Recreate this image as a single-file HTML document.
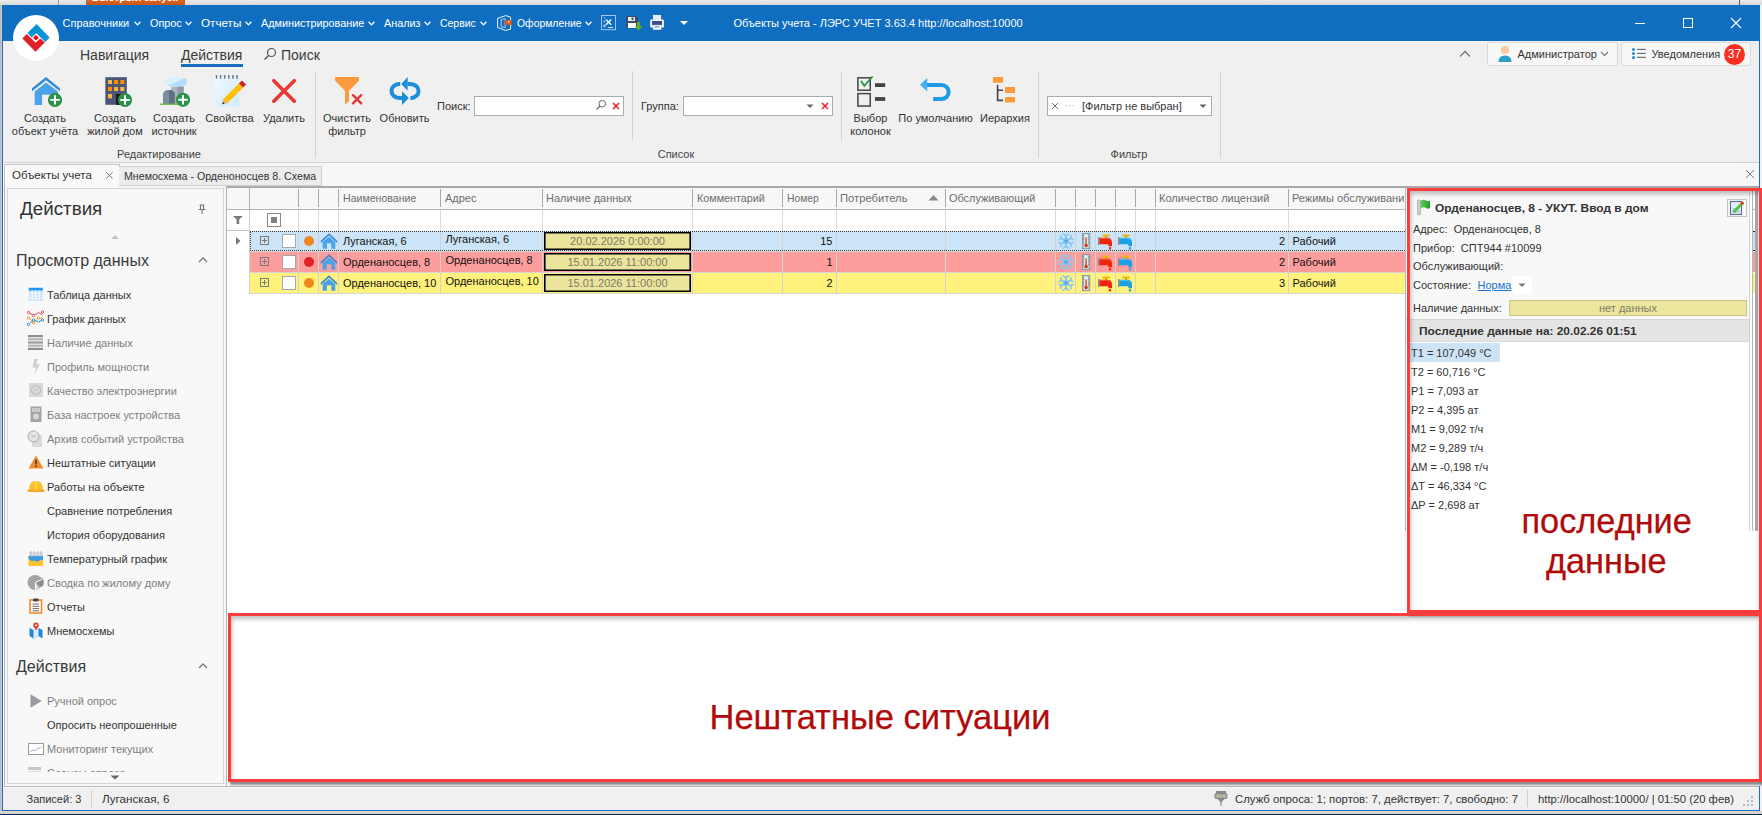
<!DOCTYPE html>
<html><head><meta charset="utf-8">
<style>
*{margin:0;padding:0;box-sizing:border-box}
html,body{width:1762px;height:815px;overflow:hidden}
body{position:relative;background:#f0f0f0;font-family:"Liberation Sans",sans-serif;font-size:11px;color:#333}
.a{position:absolute;white-space:nowrap}
.t{position:absolute;white-space:nowrap;line-height:14px;height:14px}
.w{color:#fff}
svg{position:absolute;overflow:visible}
.mi{position:absolute;top:16px;line-height:14px;color:#fff;font-size:11px;white-space:nowrap}
.chev{display:inline-block;width:4.6px;height:4.6px;border-right:1.3px solid #fff;border-bottom:1.3px solid #fff;transform:rotate(45deg);margin-left:5px;position:relative;top:-3px}
.lbl{position:absolute;text-align:center;line-height:13px;color:#333;white-space:nowrap}
.grp{position:absolute;top:147px;line-height:14px;color:#444;text-align:center}
.sep{position:absolute;width:1px;background:#d4d4d4}
.nav{position:absolute;left:47px;line-height:14px;color:#333}
.nav.g{color:#7f7f7f}
.hd{position:absolute;top:191px;line-height:14px;color:#6d6d6d}
.vl{position:absolute;width:1px;background:#d8d8d8}
.row{position:absolute;left:250px;width:1155px;height:21px}
.ct{position:absolute;line-height:14px;color:#111}
.pl{position:absolute;left:1413px;line-height:14px;color:#333}
.li{position:absolute;left:1411px;line-height:14px;color:#333}
</style></head><body>

<!-- top strip (desktop behind) -->
<div class="a" style="left:0;top:0;width:1762px;height:5px;background:linear-gradient(#ececec,#d6d6d6)"></div>
<div class="a" style="left:58px;top:0;width:1px;height:5px;background:#9a9a9a"></div>
<div class="a" style="left:86px;top:0;width:1px;height:5px;background:#7a7a7a"></div>
<div class="a" style="left:87px;top:0;width:98px;height:5px;background:linear-gradient(#e0641e,#c8561a);overflow:hidden"><div class="a" style="left:4.5px;top:-9.8px;font-size:11px;line-height:14px;color:#fff;font-weight:bold;transform-origin:0 0;transform:scaleX(0.95)">Быстрый запуск</div></div>
<div class="a" style="left:1739px;top:0;width:1px;height:5px;background:#555"></div>
<div class="a" style="left:0;top:5px;width:2px;height:810px;background:linear-gradient(90deg,#b4b4b4,#d0d0d0)"></div>

<!-- window frame -->
<div class="a" style="left:2px;top:5px;width:1758px;height:806px;border:1px solid #1a6fc0;background:#f0f0f0"></div>

<!-- title bar -->
<div class="a" style="left:2px;top:5px;width:1758px;height:36px;background:#0f6ebf"></div>


<!-- logo -->
<div class="a" style="left:13px;top:15px;width:46px;height:46px;border-radius:50%;background:#fff"></div>
<svg style="left:10px;top:10px" width="52" height="52" viewBox="0 0 52 52">
<polygon points="17.5,23 26.5,14 39.6,27.4 35.1,31.9 26.5,23.2 21.6,27.4" fill="#0894d6"/>
<polygon points="12.4,28.4 16.8,23.9 25.5,32.8 30.3,28.5 34.8,32.6 25.5,41.8" fill="#e21f26"/>
<polygon points="25.9,25 28.7,27.8 25.9,30.6 23.1,27.8" fill="#f00"/>
</svg>
<!-- menu -->
<div class="mi" style="left:62.5px;transform-origin:0 0;transform:scaleX(1.0)">Справочники</div><svg style="left:133.7px;top:20.5px" width="7" height="5" viewBox="0 0 7 5"><path d="M0.6 0.8 L3.5 3.9 L6.4 0.8" fill="none" stroke="#fff" stroke-width="1.3"/></svg>
<div class="mi" style="left:149.5px;transform-origin:0 0;transform:scaleX(0.985)">Опрос</div><svg style="left:184.8px;top:20.5px" width="7" height="5" viewBox="0 0 7 5"><path d="M0.6 0.8 L3.5 3.9 L6.4 0.8" fill="none" stroke="#fff" stroke-width="1.3"/></svg>
<div class="mi" style="left:200.5px;transform-origin:0 0;transform:scaleX(1.06)">Отчеты</div><svg style="left:245.1px;top:20.5px" width="7" height="5" viewBox="0 0 7 5"><path d="M0.6 0.8 L3.5 3.9 L6.4 0.8" fill="none" stroke="#fff" stroke-width="1.3"/></svg>
<div class="mi" style="left:260.5px;transform-origin:0 0;transform:scaleX(0.985)">Администрирование</div><svg style="left:368px;top:20.5px" width="7" height="5" viewBox="0 0 7 5"><path d="M0.6 0.8 L3.5 3.9 L6.4 0.8" fill="none" stroke="#fff" stroke-width="1.3"/></svg>
<div class="mi" style="left:383.5px;transform-origin:0 0;transform:scaleX(0.98)">Анализ</div><svg style="left:423.9px;top:20.5px" width="7" height="5" viewBox="0 0 7 5"><path d="M0.6 0.8 L3.5 3.9 L6.4 0.8" fill="none" stroke="#fff" stroke-width="1.3"/></svg>
<div class="mi" style="left:439.5px;transform-origin:0 0;transform:scaleX(0.95)">Сервис</div><svg style="left:479.5px;top:20.5px" width="7" height="5" viewBox="0 0 7 5"><path d="M0.6 0.8 L3.5 3.9 L6.4 0.8" fill="none" stroke="#fff" stroke-width="1.3"/></svg>
<svg style="left:494px;top:12px" width="26" height="22" viewBox="494 12 26 22">
<path d="M497.6 18.4 L505.6 15.6 L510.6 17.1 L510.6 29.1 L505.6 30.4 L497.6 27.6 Z" fill="none" stroke="#fff" stroke-width="0.9"/>
<path d="M501.2 19.6 L505.2 18.7 L505.2 27.4 L501.2 27 Z" fill="none" stroke="#dbeaf7" stroke-width="0.8"/>
<rect x="504.9" y="20.1" width="6.9" height="4.7" fill="#e8501a"/>
<path d="M507.5 21.3 H510 M508.7 21.3 V23.5" stroke="#f6d0c0" stroke-width="0.9"/>
</svg>
<div class="mi" style="left:516.5px;transform-origin:0 0;transform:scaleX(0.945)">Оформление</div><svg style="left:585px;top:20.5px" width="7" height="5" viewBox="0 0 7 5"><path d="M0.6 0.8 L3.5 3.9 L6.4 0.8" fill="none" stroke="#fff" stroke-width="1.3"/></svg>
<svg style="left:600px;top:14px" width="18" height="18" viewBox="0 0 18 18">
<rect x="1.5" y="1.5" width="14" height="14.2" fill="none" stroke="#9fc6ea" stroke-width="1"/>
<path d="M6 5.5 L11.2 10.7 M11.2 5.5 L6 10.7" stroke="#f2f7fc" stroke-width="1.5"/>
<circle cx="4.5" cy="3.8" r="0.8" fill="#9cc4e8"/><circle cx="4.3" cy="7.5" r="1" fill="#9cc4e8"/><circle cx="4.5" cy="11.8" r="1.5" fill="#9cc4e8"/><path d="M8 13.5 L13 13.5" stroke="#c9dff2" stroke-width="1"/>
</svg>
<svg style="left:625px;top:14px" width="18" height="18" viewBox="0 0 18 18">
<path d="M1 2 L11 2 L13 4 L13 14 L1 14 Z" fill="#3b4b6b"/>
<rect x="3" y="3" width="7" height="4" fill="#e8eef5"/><rect x="6.5" y="3.5" width="2" height="2.5" fill="#3b4b6b"/>
<rect x="3" y="9" width="8" height="5" fill="#fff"/>
<path d="M12 8 L12 12 L9.5 12 L13.5 16.5 L17.5 12 L15 12 L15 8 Z" fill="#5cb030"/>
</svg>
<svg style="left:648px;top:12px" width="18" height="20" viewBox="648 12 18 20">
<rect x="653.4" y="15.3" width="7.3" height="6.9" fill="#e4e8f2" stroke="#fff" stroke-width="0.7"/>
<rect x="650.2" y="19.5" width="13.7" height="8.1" rx="1.2" fill="#f4f6fb"/>
<rect x="652" y="21" width="10" height="4.2" fill="#3d4a7a"/>
<rect x="653.1" y="25.1" width="7.9" height="4.6" fill="#fff" stroke="#c9d3e6" stroke-width="0.6"/>
<rect x="654.5" y="26.3" width="5" height="1.1" fill="#4a90d9"/>
</svg>
<svg style="left:679px;top:20px" width="10" height="6" viewBox="0 0 10 6"><path d="M1 1 L9 1 L5 5 Z" fill="#fff"/></svg>
<div class="mi" style="left:733.5px">Объекты учета - ЛЭРС УЧЕТ 3.63.4 http://localhost:10000</div>
<!-- window buttons -->
<div class="a" style="left:1635px;top:23px;width:10px;height:1px;background:#fff"></div>
<div class="a" style="left:1683px;top:18px;width:10px;height:10px;border:1px solid #fff"></div>
<svg style="left:1730px;top:17px" width="12" height="12" viewBox="0 0 12 12"><path d="M1 1 L11 11 M11 1 L1 11" stroke="#fff" stroke-width="1.1"/></svg>


<!-- ribbon tabs -->
<div class="a" style="left:80px;top:45.5px;font-size:14px;line-height:18px;color:#3a3a3a">Навигация</div>
<div class="a" style="left:181px;top:45.5px;font-size:14px;line-height:18px;color:#3a3a3a">Действия</div>
<div class="a" style="left:181px;top:64px;width:62px;height:3px;background:#1b6ec2"></div>
<svg style="left:263px;top:47px" width="14" height="14" viewBox="0 0 14 14"><circle cx="8.5" cy="5.5" r="4" fill="none" stroke="#555" stroke-width="1.2"/><path d="M5.6 8.4 L1.5 12.5" stroke="#555" stroke-width="1.4"/></svg>
<div class="a" style="left:281px;top:45.5px;font-size:14px;line-height:18px;color:#3a3a3a">Поиск</div>

<!-- ribbon icons -->
<svg style="left:28px;top:72px" width="36" height="38" viewBox="28 72 36 38">
<path d="M32 88.2 L46 77 L59.9 88.2 L59.9 91.2 L46 80.2 L32 91.2 Z" fill="#2f8ad8"/>
<path d="M34.7 91.6 L46 82.6 L58 91.6 L58 105 L34.7 105 Z" fill="#4aa3ea"/>
<rect x="42.1" y="94.7" width="10" height="10.4" fill="#f0f0f0"/>
<circle cx="55" cy="99.9" r="7.1" fill="#2e9148"/>
<path d="M50.3 99.9 H59.7 M55 95.2 V104.6" stroke="#fff" stroke-width="1.9"/>
</svg>
<svg style="left:100px;top:72px" width="36" height="38" viewBox="100 72 36 38">
<rect x="105.3" y="77.2" width="21.5" height="27.6" fill="#4a5677"/>
<rect x="108" y="80" width="4" height="4" fill="#ffb347"/><rect x="114.1" y="80" width="4" height="4" fill="#ff8f00"/><rect x="120.3" y="80" width="4" height="4" fill="#ff8f00"/>
<rect x="108" y="87" width="4" height="4" fill="#ff8f00"/><rect x="114.1" y="87" width="4" height="4" fill="#ffb347"/><rect x="120.3" y="87" width="4" height="4" fill="#ffb347"/>
<rect x="108" y="94" width="4" height="4.4" fill="#ffb347"/>
<rect x="116" y="94" width="6" height="10.8" fill="#1a1a1a"/>
<circle cx="125" cy="100" r="7.1" fill="#2e9148"/>
<path d="M120.3 100 H129.7 M125 95.3 V104.7" stroke="#fff" stroke-width="1.9"/>
</svg>
<svg style="left:156px;top:72px" width="36" height="38" viewBox="156 72 36 38">
<ellipse cx="175.5" cy="81.8" rx="11.4" ry="4.9" fill="#dcf0fc"/>
<path d="M167 86 L185 77.8 Q187.5 79.5 186.8 82.5 Q186 86.5 181 86.7 Z" fill="#b3defa"/>
<path d="M171.1 86.7 H183.8 L183 103.9 H172 Z" fill="#a9b5be"/>
<path d="M177.5 86.7 H183.8 L183 103.9 H177.5 Z" fill="#8d9ba6"/>
<path d="M163 103.9 V95 Q163 90 169 90 Q174.8 90 174.8 95 V103.9 Z" fill="#7b8d9e"/>
<path d="M169 90 Q174.8 90 174.8 95 V103.9 H169 Z" fill="#5c7080"/>
<rect x="160" y="103.5" width="18" height="1.4" fill="#6fb43f"/>
<circle cx="183" cy="99.8" r="7.1" fill="#2e9148"/>
<path d="M178.3 99.8 H187.7 M183 95.1 V104.5" stroke="#fff" stroke-width="1.9"/>
</svg>
<svg style="left:210px;top:72px" width="40" height="38" viewBox="210 72 40 38">
<defs><linearGradient id="np" x1="0" y1="0" x2="1" y2="1"><stop offset="0" stop-color="#eff8fe"/><stop offset="1" stop-color="#d3eaf9"/></linearGradient></defs>
<rect x="214" y="76.5" width="25.7" height="30.2" fill="url(#np)"/>
<path d="M216.5 75 V78.7 M220.6 75 V78.7 M224.7 75 V78.7 M228.8 75 V78.7 M232.9 75 V78.7 M237 75 V78.7" stroke="#6c7a8c" stroke-width="1.5"/>
<path d="M225 101.5 L241 85.5" stroke="#ffc107" stroke-width="6"/>
<path d="M241 85.5 L244 82.5" stroke="#c62828" stroke-width="6"/>
<path d="M222.2 104.3 L223.5 98.8 L227.7 103 Z" fill="#e8b27a"/>
<path d="M222.2 104.3 L222.8 101.8 L224.7 103.7 Z" fill="#333"/>
</svg>
<svg style="left:268px;top:72px" width="32" height="36" viewBox="268 72 32 36">
<path d="M273.8 80.7 L294.3 101.2 M294.3 80.7 L273.8 101.2" stroke="#e53935" stroke-width="3.6" stroke-linecap="round"/>
</svg>
<svg style="left:330px;top:72px" width="36" height="38" viewBox="330 72 36 38">
<path d="M335.1 77 H359 V80.8 L349 90.7 V101 L345 104.6 V90.7 L335.1 80.8 Z" fill="#fd9a3c"/>
<path d="M353 95.2 L361.2 103.4 M361.2 95.2 L353 103.4" stroke="#e53935" stroke-width="2.4" stroke-linecap="round"/>
</svg>
<svg style="left:389px;top:74px" width="38" height="34" viewBox="0 -3 38 34">
<path d="M11.2 6.9 A8.2 7.1 0 0 0 10.2 21.1 L14 21.1" fill="none" stroke="#1a8ed8" stroke-width="4"/>
<path d="M13 14.3 L19.9 21.1 L13 27.9 Z" fill="#1a8ed8"/>
<path d="M21.4 21.1 A8.2 7.1 0 0 0 21.4 6.9 L18.5 6.9" fill="none" stroke="#1a8ed8" stroke-width="4"/>
<path d="M18.7 0.1 L12.2 6.9 L18.7 13.7 Z" fill="#1a8ed8"/>
</svg>
<svg style="left:850px;top:72px" width="40" height="38" viewBox="850 72 40 38">
<rect x="857.9" y="77.8" width="12.3" height="12.4" fill="none" stroke="#444" stroke-width="1.5"/>
<rect x="857.9" y="93.6" width="12.3" height="12.4" fill="none" stroke="#444" stroke-width="1.5"/>
<path d="M861 81 L864.3 85.8 L872.6 76.5" fill="none" stroke="#22973c" stroke-width="1.8"/>
<rect x="875" y="83.2" width="10.2" height="3.8" fill="#444"/>
<rect x="875" y="97.1" width="10.2" height="3.8" fill="#444"/>
</svg>
<svg style="left:915px;top:72px" width="42" height="36" viewBox="915 72 42 36">
<path d="M926 85 H941.5 A7.2 7 0 0 1 941.5 99 H933.2" fill="none" stroke="#1e9be8" stroke-width="4"/>
<path d="M920 84.8 L927.2 78.1 V91.4 Z" fill="#47aef0"/>
</svg>
<svg style="left:990px;top:72px" width="30" height="36" viewBox="990 72 30 36">
<rect x="993" y="77.1" width="10" height="5.6" rx="0.5" fill="#fd9a3c"/>
<path d="M997.6 84.8 V100.4 H1003 M997.6 90.2 H1003" fill="none" stroke="#444" stroke-width="1.6"/>
<rect x="1005" y="87.1" width="10" height="5.9" rx="0.5" fill="#fd9a3c"/>
<rect x="1005" y="97" width="10" height="5.6" rx="0.5" fill="#fd9a3c"/>
</svg>

<!-- ribbon labels -->
<div class="lbl" style="left:5px;top:112px;width:80px">Создать<br>объект учёта</div>
<div class="lbl" style="left:75px;top:112px;width:80px">Создать<br>жилой дом</div>
<div class="lbl" style="left:134px;top:112px;width:80px">Создать<br>источник</div>
<div class="lbl" style="left:189.5px;top:112px;width:80px">Свойства</div>
<div class="lbl" style="left:244px;top:112px;width:80px">Удалить</div>
<div class="lbl" style="left:307px;top:112px;width:80px">Очистить<br>фильтр</div>
<div class="lbl" style="left:364.5px;top:112px;width:80px">Обновить</div>
<div class="lbl" style="left:830.5px;top:112px;width:80px">Выбор<br>колонок</div>
<div class="lbl" style="left:885.5px;top:112px;width:100px">По умолчанию</div>
<div class="lbl" style="left:965px;top:112px;width:80px">Иерархия</div>

<div class="grp" style="left:59px;width:200px">Редактирование</div>
<div class="grp" style="left:576px;width:200px">Список</div>
<div class="grp" style="left:1029px;width:200px">Фильтр</div>
<div class="sep" style="left:315px;top:71px;height:87px"></div>
<div class="sep" style="left:632px;top:71px;height:70px"></div>
<div class="sep" style="left:841px;top:71px;height:70px"></div>
<div class="sep" style="left:1038px;top:71px;height:87px"></div>
<div class="sep" style="left:1220px;top:71px;height:87px"></div>

<!-- search boxes -->
<div class="t" style="left:437px;top:99px;color:#333">Поиск:</div>
<div class="a" style="left:474px;top:96px;width:150px;height:20px;background:#fff;border:1px solid #acacac"></div>
<svg style="left:595px;top:99px" width="12" height="12" viewBox="0 0 12 12"><circle cx="7.3" cy="4.7" r="3.3" fill="none" stroke="#666" stroke-width="1"/><path d="M5 7 L1.5 10.5" stroke="#666" stroke-width="1.3"/></svg>
<svg style="left:612px;top:102px" width="8" height="8" viewBox="0 0 8 8"><path d="M1 1 L7 7 M7 1 L1 7" stroke="#e8222a" stroke-width="1.6"/></svg>
<div class="t" style="left:641px;top:99px;color:#333">Группа:</div>
<div class="a" style="left:683px;top:96px;width:150px;height:20px;background:#fff;border:1px solid #acacac"></div>
<svg style="left:806px;top:104px" width="8" height="5" viewBox="0 0 8 5"><path d="M0.5 0.5 H7.5 L4 4 Z" fill="#666"/></svg>
<svg style="left:821px;top:102px" width="8" height="8" viewBox="0 0 8 8"><path d="M1 1 L7 7 M7 1 L1 7" stroke="#e8222a" stroke-width="1.6"/></svg>

<div class="a" style="left:1047px;top:96px;width:165px;height:20px;background:#fff;border:1px solid #acacac"></div>
<svg style="left:1050.5px;top:102px" width="8" height="8" viewBox="0 0 8 8"><path d="M1 1 L7 7 M7 1 L1 7" stroke="#777" stroke-width="1"/></svg>
<div class="t" style="left:1065px;top:98px;color:#bbb;letter-spacing:-0.5px">···</div>
<div class="t" style="left:1082px;top:99px;color:#333">[Фильтр не выбран]</div>
<svg style="left:1199px;top:104px" width="8" height="5" viewBox="0 0 8 5"><path d="M0.5 0.5 H7.5 L4 4 Z" fill="#666"/></svg>

<!-- ribbon bottom -->
<div class="a" style="left:3px;top:162px;width:1756px;height:1px;background:#d2d2d2"></div>

<!-- right of ribbon -->
<svg style="left:1459px;top:50px" width="12" height="8" viewBox="0 0 12 8"><path d="M1 6.5 L6 1.5 L11 6.5" fill="none" stroke="#777" stroke-width="1.3"/></svg>
<div class="a" style="left:1487px;top:42px;width:131px;height:24px;background:#f7f7f7;border:1px solid #d9d9d9;border-radius:2px"></div>
<svg style="left:1497px;top:45px" width="16" height="18" viewBox="0 0 16 18"><circle cx="8" cy="5" r="4" fill="#f9c89b"/><path d="M1.5 17 Q1.5 10.5 8 10.5 Q14.5 10.5 14.5 17 Z" fill="#2aa0c4"/></svg>
<div class="t" style="left:1517.5px;top:47px;color:#333">Администратор</div>
<svg style="left:1600px;top:51px" width="9" height="6" viewBox="0 0 9 6"><path d="M1 1 L4.5 4.5 L8 1" fill="none" stroke="#777" stroke-width="1.1"/></svg>
<div class="a" style="left:1621px;top:42px;width:130px;height:24px;background:#f7f7f7;border:1px solid #d9d9d9;border-radius:2px"></div>
<svg style="left:1631px;top:47px" width="16" height="14" viewBox="0 0 16 14"><circle cx="2.5" cy="2.5" r="1.5" fill="#1b8ad6"/><circle cx="2.5" cy="6.5" r="1.5" fill="#1b8ad6"/><circle cx="2.5" cy="10.4" r="1.5" fill="#1b8ad6"/><path d="M6 2.4 H14.8 M6 6.4 H14.8 M6 10.3 H14.8" stroke="#444" stroke-width="0.9"/></svg>
<div class="t" style="left:1651.5px;top:47px;color:#333">Уведомления</div>
<div class="a" style="left:1724px;top:43.5px;width:21px;height:21px;border-radius:50%;background:#fb2f1f;color:#fff;font-size:12px;line-height:20px;text-align:center">37</div>


<!-- tab strip -->
<div class="a" style="left:3px;top:163px;width:1756px;height:24px;background:#f7f7f7"></div>
<div class="a" style="left:4px;top:164px;width:116px;height:23px;background:#f9f9f9;border:1px solid #c6c6c6;border-bottom:none"></div>
<div class="t" style="left:11.5px;top:168px;color:#333;transform-origin:0 0;transform:scaleX(1.045)">Объекты учета</div>
<svg style="left:105px;top:171px" width="9" height="9" viewBox="0 0 9 9"><path d="M1.3 1.3 L7.5 7.5 M7.5 1.3 L1.3 7.5" stroke="#777" stroke-width="1"/></svg>
<div class="a" style="left:119px;top:166px;width:203px;height:20px;background:#ececec;border:1px solid #d0d0d0;border-left:none"></div>
<div class="t" style="left:123.5px;top:169px;color:#333;transform-origin:0 0;transform:scaleX(0.966)">Мнемосхема - Орденоносцев 8. Схема</div>
<svg style="left:1744.5px;top:169px" width="10" height="10" viewBox="0 0 10 10"><path d="M1 1 L9 9 M9 1 L1 9" stroke="#6e6e6e" stroke-width="0.9"/></svg>

<!-- page background -->
<div class="a" style="left:3px;top:186px;width:1756px;height:601px;background:#f7f7f7"></div>
<div class="a" style="left:4px;top:786px;width:1755px;height:1px;background:#b8b8b8"></div><div class="a" style="left:4px;top:186px;width:1px;height:600px;background:#b8b8b8"></div><div class="a" style="left:3px;top:787px;width:1756px;height:1px;background:#fafafa"></div>

<!-- left panel -->
<div class="a" style="left:7px;top:188px;width:217px;height:596px;border:1px solid #d5d5d5;background:#f8f8f8"></div>
<div class="a" style="left:20px;top:198px;font-size:18.8px;line-height:22px;color:#333">Действия</div>
<svg style="left:197px;top:204px" width="10" height="11" viewBox="0 0 10 11"><path d="M2.5 1 H7.5 M3.5 1 V5 M6.5 1 V5 M1.5 5.5 H8.5 M5 5.5 V10" stroke="#777" stroke-width="1.1" fill="none"/></svg>
<svg style="left:111px;top:235px" width="8" height="4" viewBox="0 0 8 4"><path d="M0 4 L4 0 L8 4 Z" fill="#c4c4c4"/></svg>
<div class="a" style="left:16px;top:251.5px;font-size:16px;line-height:18px;color:#3a3a3a">Просмотр данных</div>
<svg style="left:197px;top:255px" width="12" height="9" viewBox="0 0 12 9"><path d="M2 7 L6 3 L10 7" fill="none" stroke="#777" stroke-width="1.3"/></svg>

<svg style="left:28px;top:287px" width="16" height="16" viewBox="0 0 16 16">
<rect x="0.7" y="0.8" width="14.1" height="13" fill="#bfe0fb"/>
<rect x="0.7" y="0.8" width="14.1" height="2.6" fill="#2196f3"/>
<path d="M0.7 6.2 H14.8 M0.7 9 H14.8 M0.7 11.6 H14.8 M4.2 3.4 V13.8 M7.7 3.4 V13.8 M11.2 3.4 V13.8" stroke="#fff" stroke-width="0.9"/>
</svg>
<div class="nav" style="top:288px">Таблица данных</div>
<svg style="left:27px;top:310px" width="18" height="17" viewBox="0 0 18 17">
<path d="M1.5 2.5 L6.5 5.5 L11.5 2.5 L15.5 5" fill="none" stroke="#e84a4a" stroke-width="1"/>
<path d="M1.5 7 L6.5 12.5 L11.5 8 L15.5 8" fill="none" stroke="#f59a36" stroke-width="1"/>
<path d="M1.5 14.5 L6.5 10 L11.5 12 L15.5 10" fill="none" stroke="#2b8fd9" stroke-width="1"/>
<g fill="#fff" stroke-width="1"><circle cx="1.5" cy="2.5" r="1.2" stroke="#e84a4a"/><circle cx="6.5" cy="5.5" r="1.2" stroke="#e84a4a"/><circle cx="15.5" cy="2" r="1.2" stroke="#e84a4a"/>
<circle cx="1.5" cy="8" r="1.2" stroke="#f59a36"/><circle cx="11.5" cy="8" r="1.2" stroke="#f59a36"/><circle cx="6.5" cy="13" r="1.2" stroke="#f59a36"/>
<circle cx="1.5" cy="14.5" r="1.2" stroke="#2b8fd9"/><circle cx="6.5" cy="10" r="1.2" stroke="#2b8fd9"/><circle cx="15.5" cy="10" r="1.2" stroke="#2b8fd9"/></g>
</svg>
<div class="nav" style="top:312px">График данных</div>
<svg style="left:28px;top:335px" width="16" height="16" viewBox="0 0 16 16">
<rect x="0" y="0" width="15" height="2.2" fill="#8f8f8f"/><rect x="0" y="3.2" width="15" height="2.2" fill="#b5b5b5"/><rect x="0" y="6.4" width="15" height="2.2" fill="#9a9a9a"/><rect x="0" y="9.6" width="15" height="2.2" fill="#b5b5b5"/><rect x="0" y="12.8" width="15" height="2.2" fill="#8f8f8f"/>
</svg>
<div class="nav g" style="top:336px">Наличие данных</div>
<svg style="left:31px;top:359px" width="10" height="16" viewBox="0 0 10 16"><path d="M3 0 L7 0 L5 5 L8.5 5 L4 15.5 L5 8.5 L1.5 8.5 Z" fill="#cfcfcf"/></svg>
<div class="nav g" style="top:360px">Профиль мощности</div>
<svg style="left:29px;top:383px" width="15" height="15" viewBox="0 0 15 15"><rect x="0" y="0" width="14" height="14" fill="#d9d9d9"/><circle cx="7" cy="7" r="4.5" fill="none" stroke="#b8b8b8" stroke-width="1"/><path d="M3 10 L11 4" stroke="#bbb" stroke-width="0.8"/></svg>
<div class="nav g" style="top:384px">Качество электроэнергии</div>
<svg style="left:30px;top:406px" width="12" height="17" viewBox="0 0 12 17"><rect x="0.5" y="0.5" width="11" height="15.5" fill="#a5a5a5"/><rect x="2" y="2" width="8" height="4" fill="#cacaca"/><circle cx="6" cy="10.5" r="3" fill="#d6d6d6"/></svg>
<div class="nav g" style="top:408px">База настроек устройства</div>
<svg style="left:27px;top:430px" width="18" height="18" viewBox="0 0 18 18"><rect x="5" y="5" width="10" height="12" fill="#dadada"/><circle cx="6.5" cy="6.5" r="5.5" fill="#e4e4e4" stroke="#a8a8a8" stroke-width="1"/><path d="M4.5 5 L6.5 7 L8.5 5" fill="none" stroke="#999" stroke-width="0.8"/></svg>
<div class="nav g" style="top:432px">Архив событий устройства</div>
<svg style="left:28px;top:455px" width="16" height="14" viewBox="0 0 16 14"><path d="M8 0.5 L15.5 13.5 H0.5 Z" fill="#f58a2a"/><rect x="7.2" y="4.5" width="1.7" height="5" fill="#444"/><rect x="7.2" y="10.5" width="1.7" height="1.6" fill="#444"/></svg>
<div class="nav" style="top:456px">Нештатные ситуации</div>
<svg style="left:27px;top:480px" width="18" height="13" viewBox="0 0 18 13"><path d="M2 10 Q2 1 9 1 Q16 1 16 10 Z" fill="#fbc02d"/><rect x="0.5" y="9.5" width="17" height="2.5" rx="1" fill="#f9a825"/><rect x="8" y="1" width="2" height="8.5" fill="#f9d64a"/></svg>
<div class="nav" style="top:480px">Работы на объекте</div>
<div class="nav" style="top:504px">Сравнение потребления</div>
<div class="nav" style="top:528px">История оборудования</div>
<svg style="left:28px;top:551px" width="16" height="16" viewBox="0 0 16 16"><rect x="0.5" y="5" width="14.5" height="10" fill="#fcc12e"/><path d="M0.5 5 H15 V9 Q12 8 10 11 Q7 9 4 10 Q2 9 0.5 8 Z" fill="#3a9be0"/><path d="M3 0 V6 M6.5 0 V6 M10 0 V6 M13 0 V6 M1 2 H15 M1 4.2 H15" stroke="#aab4c0" stroke-width="0.8"/></svg>
<div class="nav" style="top:552px">Температурный график</div>
<svg style="left:27px;top:574px" width="17" height="17" viewBox="0 0 17 17"><circle cx="8" cy="8.5" r="7.5" fill="#a4a4a4"/><path d="M8.5 8.5 L15 3.5 A7.5 7.5 0 0 1 15 13 Z" fill="#8d8d8d"/><path d="M8.5 8.5 L13 15 A7.5 7.5 0 0 1 8.5 16 Z" fill="#d9d9d9"/><path d="M8.5 8.5 L15.5 5 M8.5 8.5 V16" stroke="#fff" stroke-width="1"/></svg>
<div class="nav g" style="top:576px">Сводка по жилому дому</div>
<svg style="left:29px;top:598px" width="14" height="16" viewBox="0 0 14 16"><rect x="1" y="2" width="11.5" height="13" fill="#fff" stroke="#f58a2a" stroke-width="1.6"/><rect x="4" y="0.5" width="5.5" height="3" rx="1" fill="#444"/><path d="M3.5 6 H10 M3.5 8.3 H10 M3.5 10.6 H10 M3.5 12.8 H10" stroke="#555" stroke-width="0.9"/></svg>
<div class="nav" style="top:600px">Отчеты</div>
<svg style="left:29px;top:622px" width="14" height="17" viewBox="0 0 14 17"><path d="M0.5 6 L4.5 8 L9.5 6 L13.5 8 L13.5 16.5 L9.5 14 L4.5 16.5 L0.5 14 Z" fill="#1e88d6"/><path d="M4.5 8 L9.5 6 L9.5 14 L4.5 16.5 Z" fill="#fff" opacity="0.85"/><circle cx="7" cy="3.3" r="2.7" fill="#e53935"/><path d="M5 4.5 L7 8.5 L9 4.5 Z" fill="#e53935"/><circle cx="7" cy="3.3" r="1" fill="#fff"/></svg>
<div class="nav" style="top:624px">Мнемосхемы</div>

<div class="a" style="left:16px;top:657.5px;font-size:16px;line-height:18px;color:#3a3a3a">Действия</div>
<svg style="left:197px;top:661px" width="12" height="9" viewBox="0 0 12 9"><path d="M2 7 L6 3 L10 7" fill="none" stroke="#777" stroke-width="1.3"/></svg>
<svg style="left:30px;top:694px" width="12" height="14" viewBox="0 0 12 14"><path d="M0.5 0.3 L11.8 7 L0.5 13.7 Z" fill="#9b9b9b"/></svg>
<div class="nav g" style="top:694px">Ручной опрос</div>
<div class="nav" style="top:718px">Опросить неопрошенные</div>
<svg style="left:28px;top:743px" width="16" height="12" viewBox="0 0 16 12"><rect x="0.5" y="0.5" width="15" height="11" fill="#fff" stroke="#9a9a9a"/><path d="M2 9 L5 7 L7 8 L10 5 L12 5.5 L14 3.5" fill="none" stroke="#aaa" stroke-width="0.9"/></svg>
<div class="nav g" style="top:742px">Мониторинг текущих</div>
<div class="a" style="left:8px;top:764px;width:215px;height:8px;overflow:hidden">
<svg style="left:20px;top:3px" width="14" height="10" viewBox="0 0 14 10"><rect x="0" y="0" width="13" height="3" fill="#c8c8c8"/><rect x="0" y="4" width="13" height="6" fill="#dcdcdc"/></svg>
<div class="nav g" style="left:39px;top:2px">Сеансы опроса</div>
</div>
<div class="a" style="left:8px;top:772px;width:215px;height:11px;background:#f8f8f8"></div>
<svg style="left:110px;top:775px" width="10" height="5" viewBox="0 0 10 5"><path d="M0.5 0.5 H9.5 L5 4.5 Z" fill="#666"/></svg>

<!-- status bar -->
<div class="t" style="left:26.5px;top:792px;color:#333">Записей: 3</div>
<div class="a" style="left:91px;top:790px;width:1px;height:17px;background:#d0d0d0"></div>
<div class="t" style="left:101.5px;top:792px;color:#333;transform-origin:0 0;transform:scaleX(1.06)">Луганская, 6</div>
<svg style="left:1214px;top:790px" width="14" height="17" viewBox="0 0 14 17"><rect x="2" y="1" width="10" height="2" fill="#888"/><rect x="1" y="3.5" width="12" height="5" rx="1" fill="#a8a8a8" stroke="#777" stroke-width="0.8"/><path d="M3 8.5 L11 8.5 L7 12.5 Z" fill="#888"/><path d="M7 12 V16" stroke="#777" stroke-width="1"/><circle cx="4" cy="6" r="0.8" fill="#f5d36a"/><circle cx="7" cy="6" r="0.8" fill="#f5d36a"/><circle cx="10" cy="6" r="0.8" fill="#f5d36a"/></svg>
<div class="t" style="left:1234.5px;top:792px;color:#333;transform-origin:0 0;transform:scaleX(1.033)">Служб опроса: 1; портов: 7, действует: 7, свободно: 7</div>
<div class="a" style="left:1527px;top:790px;width:1px;height:17px;background:#d0d0d0"></div>
<div class="t" style="left:1537.5px;top:792px;color:#333;transform-origin:0 0;transform:scaleX(1.027)">http://localhost:10000/ | 01:50 (20 фев)</div>
<svg style="left:1743px;top:795px" width="12" height="12" viewBox="0 0 12 12"><g fill="#bbb"><rect x="8" y="1" width="2" height="2"/><rect x="4" y="5" width="2" height="2"/><rect x="8" y="5" width="2" height="2"/><rect x="0" y="9" width="2" height="2"/><rect x="4" y="9" width="2" height="2"/><rect x="8" y="9" width="2" height="2"/></g></svg>
<div class="a" style="left:0;top:811px;width:1762px;height:3px;background:#d8d4d0"></div>
<div class="a" style="left:0;top:814px;width:1762px;height:1px;background:#0c2340"></div>

<!-- grid -->
<div class="a" style="left:226px;top:186px;width:1180px;height:600px;background:#fff"></div>
<div class="a" style="left:226px;top:186px;width:1180px;height:2px;background:#a9a9a9"></div>
<div class="a" style="left:226px;top:186px;width:1px;height:600px;background:#b5b5b5"></div>
<div class="a" style="left:227px;top:188px;width:1178px;height:21px;background:#f7f7f7"></div>
<div class="a" style="left:227px;top:209px;width:1178px;height:1px;background:#b4b4b4"></div>
<div class="a" style="left:227px;top:230px;width:22px;height:1px;background:#c4c4c4"></div>
<div class="a" style="left:249px;top:188px;width:1px;height:22px;background:#b4b4b4"></div>
<div class="a" style="left:298px;top:189px;width:1px;height:18px;background:#a8a8a8"></div>
<div class="a" style="left:318px;top:189px;width:1px;height:18px;background:#a8a8a8"></div>
<div class="a" style="left:338px;top:189px;width:1px;height:18px;background:#a8a8a8"></div>
<div class="a" style="left:440px;top:189px;width:1px;height:18px;background:#a8a8a8"></div>
<div class="a" style="left:542px;top:189px;width:1px;height:18px;background:#a8a8a8"></div>
<div class="a" style="left:692px;top:189px;width:1px;height:18px;background:#a8a8a8"></div>
<div class="a" style="left:782px;top:189px;width:1px;height:18px;background:#a8a8a8"></div>
<div class="a" style="left:836px;top:189px;width:1px;height:18px;background:#a8a8a8"></div>
<div class="a" style="left:945px;top:189px;width:1px;height:18px;background:#a8a8a8"></div>
<div class="a" style="left:1055px;top:189px;width:1px;height:18px;background:#a8a8a8"></div>
<div class="a" style="left:1075px;top:189px;width:1px;height:18px;background:#a8a8a8"></div>
<div class="a" style="left:1095px;top:189px;width:1px;height:18px;background:#a8a8a8"></div>
<div class="a" style="left:1115px;top:189px;width:1px;height:18px;background:#a8a8a8"></div>
<div class="a" style="left:1135px;top:189px;width:1px;height:18px;background:#a8a8a8"></div>
<div class="a" style="left:1155px;top:189px;width:1px;height:18px;background:#a8a8a8"></div>
<div class="a" style="left:1288px;top:189px;width:1px;height:18px;background:#a8a8a8"></div>
<div class="a" style="left:249px;top:210px;width:1px;height:84px;background:#cfcfcf"></div>
<div class="a" style="left:298px;top:210px;width:1px;height:21px;background:#dadada"></div>
<div class="a" style="left:318px;top:210px;width:1px;height:21px;background:#dadada"></div>
<div class="a" style="left:338px;top:210px;width:1px;height:21px;background:#dadada"></div>
<div class="a" style="left:440px;top:210px;width:1px;height:21px;background:#dadada"></div>
<div class="a" style="left:542px;top:210px;width:1px;height:21px;background:#dadada"></div>
<div class="a" style="left:692px;top:210px;width:1px;height:21px;background:#dadada"></div>
<div class="a" style="left:782px;top:210px;width:1px;height:21px;background:#dadada"></div>
<div class="a" style="left:836px;top:210px;width:1px;height:21px;background:#dadada"></div>
<div class="a" style="left:945px;top:210px;width:1px;height:21px;background:#dadada"></div>
<div class="a" style="left:1055px;top:210px;width:1px;height:21px;background:#dadada"></div>
<div class="a" style="left:1075px;top:210px;width:1px;height:21px;background:#dadada"></div>
<div class="a" style="left:1095px;top:210px;width:1px;height:21px;background:#dadada"></div>
<div class="a" style="left:1115px;top:210px;width:1px;height:21px;background:#dadada"></div>
<div class="a" style="left:1135px;top:210px;width:1px;height:21px;background:#dadada"></div>
<div class="a" style="left:1155px;top:210px;width:1px;height:21px;background:#dadada"></div>
<div class="a" style="left:1288px;top:210px;width:1px;height:21px;background:#dadada"></div>
<div class="hd" style="left:342.5px;transform-origin:0 0;transform:scaleX(0.962)">Наименование</div>
<div class="hd" style="left:445px;transform-origin:0 0;transform:scaleX(1.0)">Адрес</div>
<div class="hd" style="left:546px;transform-origin:0 0;transform:scaleX(1.0)">Наличие данных</div>
<div class="hd" style="left:696.5px;transform-origin:0 0;transform:scaleX(0.98)">Комментарий</div>
<div class="hd" style="left:786.5px;transform-origin:0 0;transform:scaleX(0.936)">Номер</div>
<div class="hd" style="left:840px;transform-origin:0 0;transform:scaleX(1.02)">Потребитель</div>
<div class="hd" style="left:949px;transform-origin:0 0;transform:scaleX(0.99)">Обслуживающий</div>
<div class="hd" style="left:1159px">Количество лицензий</div>
<div class="a" style="left:1289px;top:189px;width:115px;height:20px;overflow:hidden"><div class="hd" style="left:3px;top:2px">Режимы обслуживания</div></div>
<svg style="left:928px;top:194px" width="11" height="7" viewBox="0 0 11 7"><path d="M0.5 6.5 L5.5 1 L10.5 6.5 Z" fill="#8a8a8a"/></svg>
<svg style="left:233px;top:216px" width="10" height="8" viewBox="0 0 10 8"><path d="M0 0 H9.8 L6.2 3.6 V8 H3.6 V3.6 Z" fill="#7a7a7a"/></svg>
<div class="a" style="left:267px;top:213px;width:14px;height:14px;border:1px solid #8a8a8a;background:#fff"></div>
<div class="a" style="left:271px;top:217px;width:6px;height:6px;background:#808080"></div>
<div class="a" style="left:250px;top:231px;width:1155px;height:21px;background:#cce4f7"></div>
<div class="a" style="left:250px;top:251px;width:1155px;height:1px;background:#d6d6d6"></div>
<div class="a" style="left:298px;top:231px;width:1px;height:21px;background:#d2d2d2"></div>
<div class="a" style="left:318px;top:231px;width:1px;height:21px;background:#d2d2d2"></div>
<div class="a" style="left:338px;top:231px;width:1px;height:21px;background:#d2d2d2"></div>
<div class="a" style="left:440px;top:231px;width:1px;height:21px;background:#d2d2d2"></div>
<div class="a" style="left:542px;top:231px;width:1px;height:21px;background:#d2d2d2"></div>
<div class="a" style="left:692px;top:231px;width:1px;height:21px;background:#d2d2d2"></div>
<div class="a" style="left:782px;top:231px;width:1px;height:21px;background:#d2d2d2"></div>
<div class="a" style="left:836px;top:231px;width:1px;height:21px;background:#d2d2d2"></div>
<div class="a" style="left:945px;top:231px;width:1px;height:21px;background:#d2d2d2"></div>
<div class="a" style="left:1055px;top:231px;width:1px;height:21px;background:#d2d2d2"></div>
<div class="a" style="left:1075px;top:231px;width:1px;height:21px;background:#d2d2d2"></div>
<div class="a" style="left:1095px;top:231px;width:1px;height:21px;background:#d2d2d2"></div>
<div class="a" style="left:1115px;top:231px;width:1px;height:21px;background:#d2d2d2"></div>
<div class="a" style="left:1135px;top:231px;width:1px;height:21px;background:#d2d2d2"></div>
<div class="a" style="left:1155px;top:231px;width:1px;height:21px;background:#d2d2d2"></div>
<div class="a" style="left:1288px;top:231px;width:1px;height:21px;background:#d2d2d2"></div>
<div class="a" style="left:260px;top:236px;width:9px;height:9px;border:1.4px solid #7a7a7a"></div>
<svg style="left:260px;top:236px" width="9" height="9" viewBox="0 0 9 9"><path d="M4.5 2 V7 M2 4.5 H7" stroke="#7a7a7a" stroke-width="1"/></svg>
<div class="a" style="left:282px;top:234px;width:14px;height:14px;border:1px solid #a6a6a6;background:#fff"></div>
<div class="a" style="left:303.7px;top:235.6px;width:10.6px;height:10.6px;border-radius:50%;background:#f0861e"></div>
<svg style="left:320px;top:232px" width="18" height="18" viewBox="0 0 18 18"><path d="M0.8 8.7 L9 1.2 L17.1 8.7 V10.9 L9 3.5 L0.8 10.9 Z" fill="#2f8ad8"/><path d="M2.6 10 L9 4.7 L15.3 10 V16.8 H11.3 V11.2 H6.9 V16.8 H2.6 Z" fill="#4aa3ea"/></svg>
<div class="ct" style="left:343px;top:234px">Луганская, 6</div>
<div class="ct" style="left:445.5px;top:232px">Луганская, 6</div>
<div class="a" style="left:544px;top:232px;width:147px;height:18px;background:#ebe49b;border:1px solid #000;box-shadow:inset 0 0 0 0.6px #000"></div>
<div class="ct" style="left:544px;top:233.5px;width:147px;text-align:center;color:#7d7a66">20.02.2026 0:00:00</div>
<div class="ct" style="left:782px;top:234px;width:50.5px;text-align:right">15</div>
<svg style="left:1058px;top:233.0px" width="16" height="16" viewBox="0 0 16 16"><g stroke="#86c8f2" fill="none" stroke-linecap="round"><path d="M8 2 V14 M2.8 5 L13.2 11 M2.8 11 L13.2 5" stroke-width="2"/><path d="M5.3 0.8 L8 2.8 L10.7 0.8 M5.3 15.2 L8 13.2 L10.7 15.2 M0.9 6.6 L3.2 5.4 L2.9 2.4 M15.1 9.4 L12.8 10.6 L13.1 13.6 M0.9 9.4 L3.2 10.6 L2.9 13.6 M15.1 6.6 L12.8 5.4 L13.1 2.4" stroke-width="1.5"/></g><path d="M8 4.6 L11 6.3 V9.7 L8 11.4 L5 9.7 V6.3 Z" fill="#7cc4f0"/><circle cx="8" cy="8" r="1.6" fill="#45adee"/></svg>
<svg style="left:1082px;top:233px" width="8" height="16" viewBox="0 0 8 16"><rect x="0.4" y="0.4" width="7.4" height="15.3" fill="#b9cdd4" stroke="#7a8f98" stroke-width="0.8"/><rect x="2.4" y="1.2" width="3.4" height="14" rx="1.7" fill="#dff6ff"/><rect x="3.2" y="4.3" width="1.8" height="8.5" fill="#e06a4a"/><circle cx="4.1" cy="12.6" r="1.8" fill="#d83a10"/><path d="M1 2.5 H2 M1 4.5 H2 M1 6.5 H2 M1 8.5 H2 M1 10.5 H2 M6.2 2.5 H7.2 M6.2 4.5 H7.2 M6.2 6.5 H7.2 M6.2 8.5 H7.2 M6.2 10.5 H7.2" stroke="#5f747c" stroke-width="0.8"/></svg>
<svg style="left:1098px;top:232.5px" width="15" height="16" viewBox="0 0 15 16"><rect x="4.2" y="1.4" width="7.6" height="2" rx="1" fill="#f2b600"/><rect x="7.3" y="3" width="1.6" height="2" fill="#d89a00"/><path d="M1.2 4.8 H9.5 Q14 4.8 14 10 V13.3 H10.4 V11.5 Q10.4 11.3 9 11.3 H1.2 Z" fill="#f0240a"/><path d="M1.2 5.5 H9 Q11 5.5 12 7" fill="none" stroke="#ff7a5a" stroke-width="0.9" opacity="0.6"/><rect x="0" y="4" width="1.5" height="8" fill="#8a8a8a"/><rect x="10.9" y="14.2" width="2.2" height="2.2" fill="#f0240a"/></svg>
<svg style="left:1118px;top:232.5px" width="15" height="16" viewBox="0 0 15 16"><rect x="4.2" y="1.4" width="7.6" height="2" rx="1" fill="#f2b600"/><rect x="7.3" y="3" width="1.6" height="2" fill="#d89a00"/><path d="M1.2 4.8 H9.5 Q14 4.8 14 10 V13.3 H10.4 V11.5 Q10.4 11.3 9 11.3 H1.2 Z" fill="#1aa0e6"/><path d="M1.2 5.5 H9 Q11 5.5 12 7" fill="none" stroke="#7fd0ff" stroke-width="0.9" opacity="0.6"/><rect x="0" y="4" width="1.5" height="8" fill="#8a8a8a"/><rect x="10.9" y="14.2" width="2.2" height="2.2" fill="#1aa0e6"/></svg>
<div class="ct" style="left:1155px;top:234px;width:130px;text-align:right">2</div>
<div class="ct" style="left:1292.5px;top:234px">Рабочий</div>
<div class="a" style="left:250px;top:252px;width:1155px;height:21px;background:#fe9d9d"></div>
<div class="a" style="left:250px;top:272px;width:1155px;height:1px;background:#d6d6d6"></div>
<div class="a" style="left:298px;top:252px;width:1px;height:21px;background:#d2d2d2"></div>
<div class="a" style="left:318px;top:252px;width:1px;height:21px;background:#d2d2d2"></div>
<div class="a" style="left:338px;top:252px;width:1px;height:21px;background:#d2d2d2"></div>
<div class="a" style="left:440px;top:252px;width:1px;height:21px;background:#d2d2d2"></div>
<div class="a" style="left:542px;top:252px;width:1px;height:21px;background:#d2d2d2"></div>
<div class="a" style="left:692px;top:252px;width:1px;height:21px;background:#d2d2d2"></div>
<div class="a" style="left:782px;top:252px;width:1px;height:21px;background:#d2d2d2"></div>
<div class="a" style="left:836px;top:252px;width:1px;height:21px;background:#d2d2d2"></div>
<div class="a" style="left:945px;top:252px;width:1px;height:21px;background:#d2d2d2"></div>
<div class="a" style="left:1055px;top:252px;width:1px;height:21px;background:#d2d2d2"></div>
<div class="a" style="left:1075px;top:252px;width:1px;height:21px;background:#d2d2d2"></div>
<div class="a" style="left:1095px;top:252px;width:1px;height:21px;background:#d2d2d2"></div>
<div class="a" style="left:1115px;top:252px;width:1px;height:21px;background:#d2d2d2"></div>
<div class="a" style="left:1135px;top:252px;width:1px;height:21px;background:#d2d2d2"></div>
<div class="a" style="left:1155px;top:252px;width:1px;height:21px;background:#d2d2d2"></div>
<div class="a" style="left:1288px;top:252px;width:1px;height:21px;background:#d2d2d2"></div>
<div class="a" style="left:260px;top:257px;width:9px;height:9px;border:1.4px solid #7a7a7a"></div>
<svg style="left:260px;top:257px" width="9" height="9" viewBox="0 0 9 9"><path d="M4.5 2 V7 M2 4.5 H7" stroke="#7a7a7a" stroke-width="1"/></svg>
<div class="a" style="left:282px;top:255px;width:14px;height:14px;border:1px solid #a6a6a6;background:#fff"></div>
<div class="a" style="left:303.7px;top:256.6px;width:10.6px;height:10.6px;border-radius:50%;background:#e31e24"></div>
<svg style="left:320px;top:253px" width="18" height="18" viewBox="0 0 18 18"><path d="M0.8 8.7 L9 1.2 L17.1 8.7 V10.9 L9 3.5 L0.8 10.9 Z" fill="#2f8ad8"/><path d="M2.6 10 L9 4.7 L15.3 10 V16.8 H11.3 V11.2 H6.9 V16.8 H2.6 Z" fill="#4aa3ea"/></svg>
<div class="ct" style="left:343px;top:255px">Орденаносцев, 8</div>
<div class="ct" style="left:445.5px;top:253px">Орденаносцев, 8</div>
<div class="a" style="left:544px;top:253px;width:147px;height:18px;background:#ebe49b;border:1px solid #000;box-shadow:inset 0 0 0 0.6px #000"></div>
<div class="ct" style="left:544px;top:254.5px;width:147px;text-align:center;color:#7d7a66">15.01.2026 11:00:00</div>
<div class="ct" style="left:782px;top:255px;width:50.5px;text-align:right">1</div>
<svg style="left:1058px;top:254.0px" width="16" height="16" viewBox="0 0 16 16"><g stroke="#86c8f2" fill="none" stroke-linecap="round"><path d="M8 2 V14 M2.8 5 L13.2 11 M2.8 11 L13.2 5" stroke-width="2"/><path d="M5.3 0.8 L8 2.8 L10.7 0.8 M5.3 15.2 L8 13.2 L10.7 15.2 M0.9 6.6 L3.2 5.4 L2.9 2.4 M15.1 9.4 L12.8 10.6 L13.1 13.6 M0.9 9.4 L3.2 10.6 L2.9 13.6 M15.1 6.6 L12.8 5.4 L13.1 2.4" stroke-width="1.5"/></g><path d="M8 4.6 L11 6.3 V9.7 L8 11.4 L5 9.7 V6.3 Z" fill="#7cc4f0"/><circle cx="8" cy="8" r="1.6" fill="#45adee"/></svg>
<svg style="left:1082px;top:254px" width="8" height="16" viewBox="0 0 8 16"><rect x="0.4" y="0.4" width="7.4" height="15.3" fill="#b9cdd4" stroke="#7a8f98" stroke-width="0.8"/><rect x="2.4" y="1.2" width="3.4" height="14" rx="1.7" fill="#dff6ff"/><rect x="3.2" y="4.3" width="1.8" height="8.5" fill="#e06a4a"/><circle cx="4.1" cy="12.6" r="1.8" fill="#d83a10"/><path d="M1 2.5 H2 M1 4.5 H2 M1 6.5 H2 M1 8.5 H2 M1 10.5 H2 M6.2 2.5 H7.2 M6.2 4.5 H7.2 M6.2 6.5 H7.2 M6.2 8.5 H7.2 M6.2 10.5 H7.2" stroke="#5f747c" stroke-width="0.8"/></svg>
<svg style="left:1098px;top:253.5px" width="15" height="16" viewBox="0 0 15 16"><rect x="4.2" y="1.4" width="7.6" height="2" rx="1" fill="#f2b600"/><rect x="7.3" y="3" width="1.6" height="2" fill="#d89a00"/><path d="M1.2 4.8 H9.5 Q14 4.8 14 10 V13.3 H10.4 V11.5 Q10.4 11.3 9 11.3 H1.2 Z" fill="#f0240a"/><path d="M1.2 5.5 H9 Q11 5.5 12 7" fill="none" stroke="#ff7a5a" stroke-width="0.9" opacity="0.6"/><rect x="0" y="4" width="1.5" height="8" fill="#8a8a8a"/><rect x="10.9" y="14.2" width="2.2" height="2.2" fill="#f0240a"/></svg>
<svg style="left:1118px;top:253.5px" width="15" height="16" viewBox="0 0 15 16"><rect x="4.2" y="1.4" width="7.6" height="2" rx="1" fill="#f2b600"/><rect x="7.3" y="3" width="1.6" height="2" fill="#d89a00"/><path d="M1.2 4.8 H9.5 Q14 4.8 14 10 V13.3 H10.4 V11.5 Q10.4 11.3 9 11.3 H1.2 Z" fill="#1aa0e6"/><path d="M1.2 5.5 H9 Q11 5.5 12 7" fill="none" stroke="#7fd0ff" stroke-width="0.9" opacity="0.6"/><rect x="0" y="4" width="1.5" height="8" fill="#8a8a8a"/><rect x="10.9" y="14.2" width="2.2" height="2.2" fill="#1aa0e6"/></svg>
<div class="ct" style="left:1155px;top:255px;width:130px;text-align:right">2</div>
<div class="ct" style="left:1292.5px;top:255px">Рабочий</div>
<div class="a" style="left:250px;top:273px;width:1155px;height:21px;background:#fff27c"></div>
<div class="a" style="left:250px;top:293px;width:1155px;height:1px;background:#d6d6d6"></div>
<div class="a" style="left:298px;top:273px;width:1px;height:21px;background:#d2d2d2"></div>
<div class="a" style="left:318px;top:273px;width:1px;height:21px;background:#d2d2d2"></div>
<div class="a" style="left:338px;top:273px;width:1px;height:21px;background:#d2d2d2"></div>
<div class="a" style="left:440px;top:273px;width:1px;height:21px;background:#d2d2d2"></div>
<div class="a" style="left:542px;top:273px;width:1px;height:21px;background:#d2d2d2"></div>
<div class="a" style="left:692px;top:273px;width:1px;height:21px;background:#d2d2d2"></div>
<div class="a" style="left:782px;top:273px;width:1px;height:21px;background:#d2d2d2"></div>
<div class="a" style="left:836px;top:273px;width:1px;height:21px;background:#d2d2d2"></div>
<div class="a" style="left:945px;top:273px;width:1px;height:21px;background:#d2d2d2"></div>
<div class="a" style="left:1055px;top:273px;width:1px;height:21px;background:#d2d2d2"></div>
<div class="a" style="left:1075px;top:273px;width:1px;height:21px;background:#d2d2d2"></div>
<div class="a" style="left:1095px;top:273px;width:1px;height:21px;background:#d2d2d2"></div>
<div class="a" style="left:1115px;top:273px;width:1px;height:21px;background:#d2d2d2"></div>
<div class="a" style="left:1135px;top:273px;width:1px;height:21px;background:#d2d2d2"></div>
<div class="a" style="left:1155px;top:273px;width:1px;height:21px;background:#d2d2d2"></div>
<div class="a" style="left:1288px;top:273px;width:1px;height:21px;background:#d2d2d2"></div>
<div class="a" style="left:260px;top:278px;width:9px;height:9px;border:1.4px solid #7a7a7a"></div>
<svg style="left:260px;top:278px" width="9" height="9" viewBox="0 0 9 9"><path d="M4.5 2 V7 M2 4.5 H7" stroke="#7a7a7a" stroke-width="1"/></svg>
<div class="a" style="left:282px;top:276px;width:14px;height:14px;border:1px solid #a6a6a6;background:#fff"></div>
<div class="a" style="left:303.7px;top:277.6px;width:10.6px;height:10.6px;border-radius:50%;background:#f0861e"></div>
<svg style="left:320px;top:274px" width="18" height="18" viewBox="0 0 18 18"><path d="M0.8 8.7 L9 1.2 L17.1 8.7 V10.9 L9 3.5 L0.8 10.9 Z" fill="#2f8ad8"/><path d="M2.6 10 L9 4.7 L15.3 10 V16.8 H11.3 V11.2 H6.9 V16.8 H2.6 Z" fill="#4aa3ea"/></svg>
<div class="ct" style="left:343px;top:276px">Орденаносцев, 10</div>
<div class="ct" style="left:445.5px;top:274px">Орденаносцев, 10</div>
<div class="a" style="left:544px;top:274px;width:147px;height:18px;background:#ebe49b;border:1px solid #000;box-shadow:inset 0 0 0 0.6px #000"></div>
<div class="ct" style="left:544px;top:275.5px;width:147px;text-align:center;color:#7d7a66">15.01.2026 11:00:00</div>
<div class="ct" style="left:782px;top:276px;width:50.5px;text-align:right">2</div>
<svg style="left:1058px;top:275.0px" width="16" height="16" viewBox="0 0 16 16"><g stroke="#86c8f2" fill="none" stroke-linecap="round"><path d="M8 2 V14 M2.8 5 L13.2 11 M2.8 11 L13.2 5" stroke-width="2"/><path d="M5.3 0.8 L8 2.8 L10.7 0.8 M5.3 15.2 L8 13.2 L10.7 15.2 M0.9 6.6 L3.2 5.4 L2.9 2.4 M15.1 9.4 L12.8 10.6 L13.1 13.6 M0.9 9.4 L3.2 10.6 L2.9 13.6 M15.1 6.6 L12.8 5.4 L13.1 2.4" stroke-width="1.5"/></g><path d="M8 4.6 L11 6.3 V9.7 L8 11.4 L5 9.7 V6.3 Z" fill="#7cc4f0"/><circle cx="8" cy="8" r="1.6" fill="#45adee"/></svg>
<svg style="left:1082px;top:275px" width="8" height="16" viewBox="0 0 8 16"><rect x="0.4" y="0.4" width="7.4" height="15.3" fill="#b9cdd4" stroke="#7a8f98" stroke-width="0.8"/><rect x="2.4" y="1.2" width="3.4" height="14" rx="1.7" fill="#dff6ff"/><rect x="3.2" y="4.3" width="1.8" height="8.5" fill="#e06a4a"/><circle cx="4.1" cy="12.6" r="1.8" fill="#d83a10"/><path d="M1 2.5 H2 M1 4.5 H2 M1 6.5 H2 M1 8.5 H2 M1 10.5 H2 M6.2 2.5 H7.2 M6.2 4.5 H7.2 M6.2 6.5 H7.2 M6.2 8.5 H7.2 M6.2 10.5 H7.2" stroke="#5f747c" stroke-width="0.8"/></svg>
<svg style="left:1098px;top:274.5px" width="15" height="16" viewBox="0 0 15 16"><rect x="4.2" y="1.4" width="7.6" height="2" rx="1" fill="#f2b600"/><rect x="7.3" y="3" width="1.6" height="2" fill="#d89a00"/><path d="M1.2 4.8 H9.5 Q14 4.8 14 10 V13.3 H10.4 V11.5 Q10.4 11.3 9 11.3 H1.2 Z" fill="#f0240a"/><path d="M1.2 5.5 H9 Q11 5.5 12 7" fill="none" stroke="#ff7a5a" stroke-width="0.9" opacity="0.6"/><rect x="0" y="4" width="1.5" height="8" fill="#8a8a8a"/><rect x="10.9" y="14.2" width="2.2" height="2.2" fill="#f0240a"/></svg>
<svg style="left:1118px;top:274.5px" width="15" height="16" viewBox="0 0 15 16"><rect x="4.2" y="1.4" width="7.6" height="2" rx="1" fill="#f2b600"/><rect x="7.3" y="3" width="1.6" height="2" fill="#d89a00"/><path d="M1.2 4.8 H9.5 Q14 4.8 14 10 V13.3 H10.4 V11.5 Q10.4 11.3 9 11.3 H1.2 Z" fill="#1aa0e6"/><path d="M1.2 5.5 H9 Q11 5.5 12 7" fill="none" stroke="#7fd0ff" stroke-width="0.9" opacity="0.6"/><rect x="0" y="4" width="1.5" height="8" fill="#8a8a8a"/><rect x="10.9" y="14.2" width="2.2" height="2.2" fill="#1aa0e6"/></svg>
<div class="ct" style="left:1155px;top:276px;width:130px;text-align:right">3</div>
<div class="ct" style="left:1292.5px;top:276px">Рабочий</div>
<div class="a" style="left:250px;top:231px;width:1155px;height:20px;border:1px dotted #3a3a3a;border-right:none"></div>
<svg style="left:236px;top:237px" width="5" height="8" viewBox="0 0 5 8"><path d="M0 0 L4.5 4 L0 8 Z" fill="#777"/></svg>

<!-- right detail panel -->
<div class="a" style="left:1404px;top:186px;width:355px;height:2px;background:#a9a9a9"></div>
<div class="a" style="left:1405px;top:188px;width:353px;height:343px;background:#f8f8f8"></div>
<div class="a" style="left:1405px;top:188px;width:1px;height:343px;background:#bdbdbd"></div>
<div class="a" style="left:1749px;top:188px;width:1px;height:343px;background:#d0d0d0"></div>
<div class="a" style="left:1750px;top:188px;width:2px;height:343px;background:#fff"></div>
<div class="a" style="left:1752px;top:188px;width:1px;height:343px;background:#b5b5b5"></div>
<div class="a" style="left:1753px;top:188px;width:2px;height:343px;background:#fff"></div>
<div class="a" style="left:1753px;top:209px;width:2px;height:1px;background:#b4b4b4"></div>
<div class="a" style="left:1753px;top:231px;width:2px;height:20px;background:#cce4f7;border-top:1px dotted #222;border-bottom:1px dotted #222"></div>
<div class="a" style="left:1753px;top:252px;width:2px;height:20px;background:#fe9d9d"></div>
<div class="a" style="left:1753px;top:273px;width:2px;height:20px;background:#fff27c"></div>
<div class="a" style="left:1755px;top:188px;width:3px;height:343px;background:#a9a9a9"></div>

<svg style="left:1416px;top:199px" width="16" height="17" viewBox="0 0 16 17">
<defs><linearGradient id="fg" x1="0" y1="0" x2="1" y2="0"><stop offset="0" stop-color="#5fd35a"/><stop offset="1" stop-color="#1f9a1f"/></linearGradient></defs>
<rect x="1.5" y="1" width="3" height="15" rx="1" fill="#cfcfcf" stroke="#9a9a9a" stroke-width="0.6"/>
<path d="M4.5 1.5 Q8 0 10 1.5 Q12 3 14 1.5 V9 Q12 10.5 10 9 Q8 7.5 4.5 9 Z" fill="url(#fg)"/>
</svg>
<div class="a" style="left:1435px;top:200.5px;line-height:14px;font-weight:bold;color:#333;transform-origin:0 0;transform:scaleX(1.085)">Орденаносцев, 8 - УКУТ. Ввод в дом</div>
<div class="a" style="left:1727px;top:199px;width:20px;height:18px;border:1px solid #c4c4c4;background:#fafafa"></div>
<svg style="left:1729px;top:200px" width="17" height="16" viewBox="0 0 17 16">
<rect x="1.5" y="1.5" width="11" height="13" fill="#e8eef8" stroke="#5a6f98" stroke-width="1.2"/>
<rect x="3.5" y="8" width="7" height="5" fill="#b9cbe6"/>
<path d="M5 11.5 L12.5 4" stroke="#45c83a" stroke-width="2.6" stroke-linecap="round"/>
<circle cx="13.3" cy="3.2" r="1.7" fill="#e8452a"/>
</svg>
<div class="pl" style="top:221.5px">Адрес:&nbsp; Орденаносцев, 8</div>
<div class="pl" style="top:240.5px">Прибор:&nbsp; СПТ944 #10099</div>
<div class="pl" style="top:259px">Обслуживающий:</div>
<div class="pl" style="top:278px">Состояние:</div>
<div class="a" style="left:1477.5px;top:278px;line-height:14px;color:#1b72c8;text-decoration:underline">Норма</div>
<div class="a" style="left:1513px;top:276px;width:19px;height:18px;background:#fff"></div>
<svg style="left:1518px;top:283px" width="8" height="5" viewBox="0 0 8 5"><path d="M0.5 0.5 H7.5 L4 4 Z" fill="#777"/></svg>
<div class="pl" style="top:301px">Наличие данных:</div>
<div class="a" style="left:1509px;top:300px;width:238px;height:16px;background:#ece59c;border:1px solid #c9c48a"></div>
<div class="a" style="left:1509px;top:301px;width:238px;line-height:14px;text-align:center;color:#807d68">нет данных</div>
<div class="a" style="left:1406px;top:319px;width:343px;height:1px;background:#d4d4d4"></div>
<div class="a" style="left:1410px;top:320px;width:339px;height:21px;background:#e4e4e4"></div>
<div class="a" style="left:1418.5px;top:324px;line-height:14px;font-weight:bold;color:#333;transform-origin:0 0;transform:scaleX(1.08)">Последние данные на: 20.02.26 01:51</div>
<div class="a" style="left:1406px;top:341px;width:343px;height:190px;background:#fff"></div><div class="a" style="left:1406px;top:341px;width:343px;height:1px;background:#dadada"></div>
<div class="a" style="left:1409px;top:343px;width:91px;height:19px;background:#cde4f7"></div>
<div class="li" style="top:345.5px">T1 = 107,049 °C</div>
<div class="li" style="top:364.5px">T2 = 60,716 °C</div>
<div class="li" style="top:383.5px">P1 = 7,093 ат</div>
<div class="li" style="top:402.5px">P2 = 4,395 ат</div>
<div class="li" style="top:421.5px">M1 = 9,092 т/ч</div>
<div class="li" style="top:440.5px">M2 = 9,289 т/ч</div>
<div class="li" style="top:459.5px">ΔM = -0,198 т/ч</div>
<div class="li" style="top:478.5px">ΔT = 46,334 °C</div>
<div class="li" style="top:497.5px">ΔP = 2,698 ат</div>
<div class="a" style="left:1395px;top:531px;width:365px;height:83px;background:#fff"></div>

<!-- lower area -->
<div class="a" style="left:227px;top:614px;width:1533px;height:172px;background:#fff"></div>

<!-- annotation boxes -->
<div class="a" style="left:1407px;top:188px;width:355px;height:425px;border:3px solid #fc3d3d;box-shadow:inset 1px 3px 4px rgba(0,0,0,0.25), 2px 3px 2px rgba(0,0,0,0.4)"></div>
<div class="a" style="left:228px;top:613px;width:1534px;height:169px;border:3px solid #fc3d3d;box-shadow:inset 1px 3px 4px rgba(0,0,0,0.25), 2px 3px 2px rgba(0,0,0,0.45)"></div>
<div class="a" style="left:1521.5px;top:501px;font-size:34.3px;line-height:40px;color:#b00a0a;-webkit-text-stroke:0.25px #b00a0a">последние</div>
<div class="a" style="left:1546px;top:541px;font-size:34.3px;line-height:40px;color:#b00a0a;-webkit-text-stroke:0.25px #b00a0a">данные</div>
<div class="a" style="left:709.5px;top:696.5px;font-size:34.5px;line-height:40px;color:#b00a0a;-webkit-text-stroke:0.25px #b00a0a">Нештатные ситуации</div>

</body></html>
